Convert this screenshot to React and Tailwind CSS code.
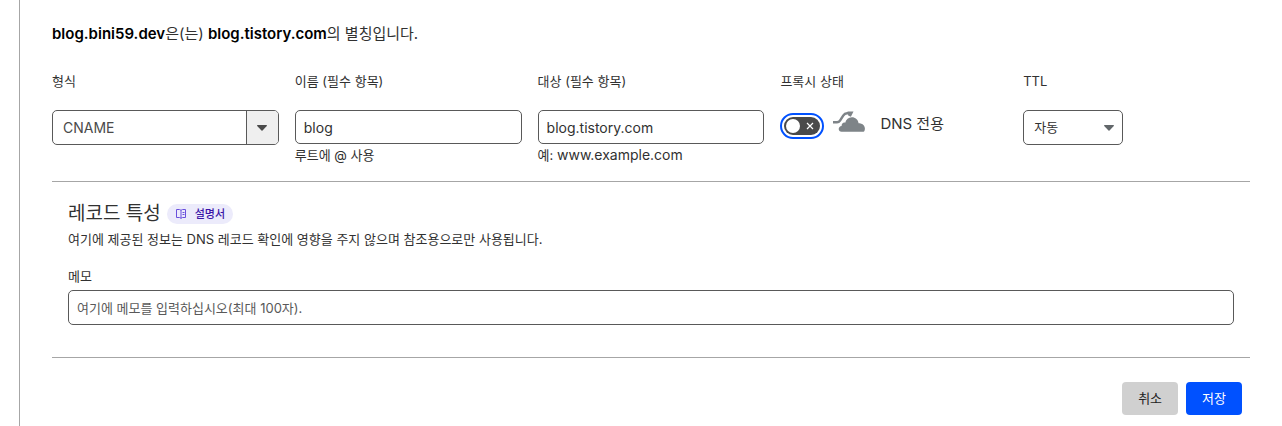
import React, { useState } from 'react';

const FONT = "font-['Inter','Noto_Sans_CJK_KR',sans-serif]";

const Caret = ({ className }) => (
  <svg viewBox="0 0 10 6" className={`w-[10px] h-[6px] ${className}`} fill="currentColor" aria-hidden="true">
    <path d="M0.6 0h8.8c.5 0 .7.5.4.9L5.5 5.6a.7.7 0 0 1-1 0L.2.9C-.1.5.1 0 .6 0z" />
  </svg>
);

const CloudIcon = () => (
  <svg viewBox="0 0 32 22" className="w-8 h-[22px] shrink-0" aria-hidden="true">
    <path d="M0 12.300h4c1.400 0 2.200-.5 3-1.700l3.200-5c1-1.600 2.200-2.300 3.900-2.300h4" fill="none" stroke="#7e8488" strokeWidth="2.500" />
    <path d="M14.500 1.600l6-.2-2.600 5.400-2.700-1.300z" fill="#7e8488" />
    <path d="M8.600 21.800c-1.800 0-2.900-1.200-2.900-2.800 0-1.700 1.200-3 2.900-3.100-.1-2.200 1.600-3.700 3.600-3.200.8-3.300 3.300-5.400 6.600-5.400 3.600 0 6.300 2.500 6.800 6 3.700 0 6.300 2.200 6.300 5.300 0 1.800-.6 3.200-1.400 3.200z" fill="#7e8488" />
  </svg>
);

const BookIcon = () => (
  <svg viewBox="0 0 12 10" className="w-3 h-[10px]" fill="none" stroke="currentColor" aria-hidden="true">
    <path d="M1.500.5h3L6 1.300 7.500.5h3v8h-3L6 9.300 4.500 8.500h-3zM6 1.300v8M7.500 3.500h2M7.500 5.500h2" />
  </svg>
);

const Field = ({ id, label, hint, children }) => (
  <div className="min-w-0">
    <label htmlFor={id} className="block mb-[19px] text-[13px] leading-5">{label}</label>
    {children}
    {hint && <p className="mt-px text-[13px] leading-5">{hint}</p>}
  </div>
);

const inputClass = 'block w-full h-[34px] rounded-[5px] border border-[#595959] bg-white px-2 text-sm leading-5 text-[#313131] outline-none';

const App = () => {
  const [name, setName] = useState('blog');
  const [target, setTarget] = useState('blog.tistory.com');
  const [proxied, setProxied] = useState(false);
  const [memo, setMemo] = useState('');

  return (
    <div className={`${FONT} min-h-screen bg-white pl-[19px] text-[#313131]`}>
      <div className="min-h-screen border-l border-[#a6a6a6] px-8 pt-[22px]">
        <p className="text-[15px] leading-6">
          <strong className="font-semibold text-black">{name}.bini59.dev</strong>은(는){' '}
          <strong className="font-semibold text-black">{target}</strong>의 별칭입니다.
        </p>

        {/* Record fields */}
        <div className="mt-[25px] grid grid-cols-5 gap-4 border-b border-[#a6a6a6] pb-4">
          <Field id="type" label="형식">
            <div className="relative">
              <select id="type" className="block w-full h-[35px] appearance-none rounded-[5px] border border-[#595959] bg-white px-[10px] text-sm text-[#4a4a4a]">
                <option>CNAME</option>
              </select>
              <span className="pointer-events-none absolute inset-y-px right-px flex w-8 items-center justify-center rounded-r-[4px] border-l border-[#595959] bg-[#efefef]">
                <Caret className="text-[#4a4a4a]" />
              </span>
            </div>
          </Field>

          <Field id="name" label="이름 (필수 항목)" hint="루트에 @ 사용">
            <input id="name" className={inputClass} value={name} onChange={(e) => setName(e.target.value)} />
          </Field>

          <Field id="target" label="대상 (필수 항목)" hint={<>예: <span className="text-sm leading-5">www.example.com</span></>}>
            <input id="target" className={inputClass} value={target} onChange={(e) => setTarget(e.target.value)} />
          </Field>

          <Field id="proxy" label="프록시 상태">
            <div className="flex h-8 items-center">
              <span className="relative flex h-[26px] w-11 shrink-0 items-center justify-center rounded-full border-2 border-[#0051ff]">
                <input
                  id="proxy"
                  type="checkbox"
                  role="switch"
                  checked={proxied}
                  onChange={(e) => setProxied(e.target.checked)}
                  className="h-[18px] w-9 appearance-none rounded-full bg-[#4a4a4a] checked:bg-[#0051ff]"
                />
                <span className={`pointer-events-none absolute top-1 size-[14px] rounded-full bg-white ${proxied ? 'right-1' : 'left-1'}`} />
                {!proxied && (
                  <svg viewBox="0 0 8 8" className="pointer-events-none absolute right-[8px] top-[7px] size-2" stroke="#fff" strokeWidth="1.200" aria-hidden="true">
                    <path d="M1 1l6 6M7 1L1 7" />
                  </svg>
                )}
              </span>
              <span className="ml-[9px] flex items-start gap-[15px] self-start">
                <CloudIcon />
                <span className="whitespace-nowrap text-[15px] leading-7">DNS 전용</span>
              </span>
            </div>
          </Field>

          <Field id="ttl" label="TTL">
            <div className="relative w-[100px]">
              <select id="ttl" className="block w-full h-[35px] appearance-none rounded-[5px] border border-[#595959] bg-white px-[10px] text-[13px] text-[#313131]">
                <option>자동</option>
              </select>
              <Caret className="pointer-events-none absolute right-[9px] top-[15px] text-[#62676a]" />
            </div>
          </Field>
        </div>

        {/* Record attributes */}
        <section className="border-b border-[#a6a6a6] px-4 pt-[18px] pb-8">
          <div className="flex items-center gap-[6px]">
            <h2 className="text-[19px] leading-7">레코드 특성</h2>
            <a href="#docs" className="flex h-5 items-center gap-2 rounded-full bg-[#ecebfb] px-2 text-[11px] font-medium text-[#3a14a8]">
              <span className="text-[#6a50dc]"><BookIcon /></span>
              설명서
            </a>
          </div>
          <p className="mt-px text-[13px] leading-5">여기에 제공된 정보는 DNS 레코드 확인에 영향을 주지 않으며 참조용으로만 사용됩니다.</p>
          <label htmlFor="memo" className="mt-[17px] block text-[13px] leading-5">메모</label>
          <input
            id="memo"
            value={memo}
            onChange={(e) => setMemo(e.target.value)}
            placeholder="여기에 메모를 입력하십시오(최대 100자)."
            className="mt-1 block h-[35px] w-full rounded-[5px] border border-[#595959] px-2 text-[13px] outline-none placeholder:text-[#595959]"
          />
        </section>

        <div className="flex justify-end gap-2 pr-2 pt-6">
          <button type="button" className="h-[33px] rounded-[4px] bg-[#d0d0d0] px-4 text-[13px] text-[#222222]">취소</button>
          <button type="submit" className="h-[33px] rounded-[4px] bg-[#0051ff] px-4 text-[13px] text-white">저장</button>
        </div>
      </div>
    </div>
  );
};

export default App;
